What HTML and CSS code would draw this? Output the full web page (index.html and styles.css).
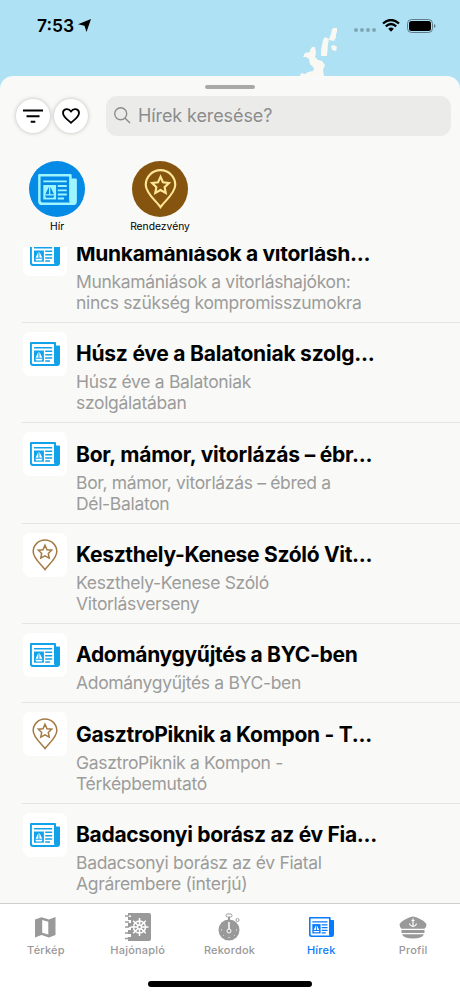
FILE: index.html
```html
<!DOCTYPE html>
<html lang="hu">
<head>
    <meta charset="UTF-8">
    <meta name="viewport" content="width=device-width, initial-scale=1.0">
    <title>Hírek</title>
    <link rel="stylesheet" href="styles.css">
</head>
<body>
    <!-- shared icons -->
    <svg class="sprite" width="0" height="0">
        <symbol id="news" viewBox="0 0 30 24">
            <path d="M26 3.500H29Q30 3.500 30 4.500V21Q30 24 27 24H3Q0 24 0 21V1Q0 0 1 0H25Q26 0 26 1Z" fill="currentColor"/>
            <path class="paper" d="M1.900 1.900H24V20Q24 21.500 24.600 22.100H3.500Q1.900 22.100 1.900 20.500Z"/>
            <path d="M4 5.700H22.200M15.200 9.300H22.200M15.200 12.700H22.200M15.200 15.900H22.200M15.200 19H20" fill="none" stroke="currentColor" stroke-width="1.500"/>
            <path d="M4 8.500H13.900V19.700H4Z" fill="currentColor"/>
            <path class="paper" d="M8.400 9.800V15.700H5.600ZM9.400 9.800L12.300 15.700H9.400ZM5.200 16.700H12.700L11.700 18.400H6.200Z"/>
        </symbol>
        <symbol id="pin" viewBox="0 0 26 32">
            <path d="M13 30.500C10 26 1.200 19.500 1.200 12.700A11.800 11.800 0 0 1 24.800 12.700C24.800 19.500 16 26 13 30.500Z"/>
            <path d="M13 6.200L15 10.700L19.700 11.200L16.300 14.500L17.200 19.100L13 16.800L8.800 19.100L9.700 14.500L6.300 11.200L11 10.700Z"/>
        </symbol>
    </svg>

    <div class="screen">
        <header class="map">
            <svg class="island" width="40" height="48" viewBox="0 0 40 48">
                <path d="M32 1L34 0H37V4L36 6V9L34 13L29 12L30 8L31 6ZM23 12L25 9L29 11L28 16L27 28H21V22L22 17ZM31 18L34 17L37 19L36 23L32 22ZM10 22L12 19H15L16 25L15 29L18 32L22 33L25 37L23 42L24 48H0L1 45L5 46L8 44L13 43L14 40L10 36L9 31L6 29H3L5 25L10 24Z"/>
            </svg>
            <div class="status">
                <span class="time">7:53</span>
                <svg class="arrow" width="13" height="13" viewBox="0 0 13 13"><path d="M13 0L8.500 13L6.500 6.800L0 5.200Z"/></svg>
                <div class="dots"><i></i><i></i><i></i><i></i></div>
                <svg width="18" height="13" viewBox="0 0 18 13">
                    <path d="M1 4.500Q9-2.500 17 4.500M3.800 7.300Q9 2.800 14.200 7.300" fill="none" stroke="#000" stroke-width="2.300"/>
                    <path d="M6.200 9.700Q9 7.500 11.800 9.700L9 12.700Z"/>
                </svg>
                <svg class="battery" width="29" height="14" viewBox="0 0 29 14">
                    <rect x="0.500" y="0.500" width="25" height="13" rx="4" fill="none" stroke="#5f7d88"/>
                    <rect x="2" y="2" width="22" height="10" rx="2.500"/>
                    <path d="M27 5Q28.500 5.500 28.500 7T27 9Z" fill="#5f7d88"/>
                </svg>
            </div>
        </header>

        <main class="sheet">
            <div class="handle"></div>
            <div class="tools">
                <button type="button" class="round">
                    <svg width="20" height="14" viewBox="0 0 20 14"><path d="M0 1.500H20M3.500 7.200H16.500M7.700 12.800H12.300" fill="none" stroke="#000" stroke-width="2"/></svg>
                </button>
                <button type="button" class="round">
                    <svg width="18" height="16" viewBox="0 0 18 16"><path d="M9 14.800C7 12.800 1 9.200 1 5C1 0.200 7 0 9 3.600C11 0 17 0.200 17 5C17 9.200 11 12.800 9 14.800Z" fill="none" stroke="#000" stroke-width="1.800" stroke-linejoin="round"/></svg>
                </button>
                <div class="search">
                    <svg width="17" height="17" viewBox="0 0 17 17"><path d="M11.200 11.200L16 16M12.700 6.700A6 6 0 1 1 0.700 6.700A6 6 0 0 1 12.700 6.700Z" fill="none" stroke="#8c8c8c" stroke-width="1.400"/></svg>
                    <span>Hírek keresése?</span>
                </div>
            </div>
            <div class="categories">
                <div class="category">
                    <div class="bubble blue"><svg width="39" height="31"><use href="#news"/></svg></div>
                    <span>Hír</span>
                </div>
                <div class="category">
                    <div class="bubble brown"><svg width="33" height="40"><use href="#pin"/></svg></div>
                    <span>Rendezvény</span>
                </div>
            </div>

            <div class="list">
                <article class="item first">
                    <div class="thumb"><svg width="30" height="24"><use href="#news"/></svg></div>
                    <div class="text">
                        <h2>Munkamániások a vitorlásh...</h2>
                        <p>Munkamániások a vitorláshajókon:<br>nincs szükség kompromisszumokra</p>
                    </div>
                </article>
                <article class="item">
                    <div class="thumb"><svg width="30" height="24"><use href="#news"/></svg></div>
                    <div class="text">
                        <h2 class="loose">Húsz éve a Balatoniak szolg...</h2>
                        <p>Húsz éve a Balatoniak<br>szolgálatában</p>
                    </div>
                </article>
                <article class="item">
                    <div class="thumb"><svg width="30" height="24"><use href="#news"/></svg></div>
                    <div class="text">
                        <h2 class="loose">Bor, mámor, vitorlázás – ébr...</h2>
                        <p>Bor, mámor, vitorlázás – ébred a<br>Dél-Balaton</p>
                    </div>
                </article>
                <article class="item">
                    <div class="thumb event"><svg width="26" height="32"><use href="#pin"/></svg></div>
                    <div class="text">
                        <h2>Keszthely-Kenese Szóló Vit...</h2>
                        <p>Keszthely-Kenese Szóló<br>Vitorlásverseny</p>
                    </div>
                </article>
                <article class="item">
                    <div class="thumb"><svg width="30" height="24"><use href="#news"/></svg></div>
                    <div class="text">
                        <h2>Adománygyűjtés a BYC-ben</h2>
                        <p>Adománygyűjtés a BYC-ben</p>
                    </div>
                </article>
                <article class="item">
                    <div class="thumb event"><svg width="26" height="32"><use href="#pin"/></svg></div>
                    <div class="text">
                        <h2>GasztroPiknik a Kompon - T...</h2>
                        <p>GasztroPiknik a Kompon -<br>Térképbemutató</p>
                    </div>
                </article>
                <article class="item">
                    <div class="thumb"><svg width="30" height="24"><use href="#news"/></svg></div>
                    <div class="text">
                        <h2>Badacsonyi borász az év Fia...</h2>
                        <p>Badacsonyi borász az év Fiatal<br>Agrárembere (interjú)</p>
                    </div>
                </article>
            </div>
        </main>

        <nav class="tabs">
            <div class="tab">
                <div class="icon"><svg width="21" height="21" viewBox="0 0 21 21"><path d="M0 2.500L6.500 0.200L14 2.500L20.500 0V18L14 20.500L6.500 18L0 20.500Z"/><path d="M7.200 3L13.300 4.700V17.500L7.200 15.700Z" fill="#fff"/></svg></div>
                <span>Térkép</span>
            </div>
            <div class="tab">
                <div class="icon"><svg width="28" height="28" viewBox="0 0 28 28">
                    <path d="M4 0H25Q27 0 27 2V26Q27 28 25 28H4V24H7V21H4V17H7V14H4V10H7V7H4V4H7V2.500H4Z"/>
                    <path d="M1 3H5M1 9H5M1 14H5M1 20H5M1 25.500H5" stroke="#999" stroke-width="1.500"/>
                    <g fill="none" stroke="#fff" stroke-width="1.500"><circle cx="15.500" cy="14" r="6"/><circle cx="15.500" cy="14" r="2"/><path d="M15.500 5V12M15.500 16V23M6.500 14H13.500M17.500 14H24.500M9.200 7.700L14 12.500M17 15.500L21.800 20.300M21.800 7.700L17 12.500M14 15.500L9.200 20.300"/></g>
                </svg></div>
                <span>Hajónapló</span>
            </div>
            <div class="tab">
                <div class="icon"><svg width="22" height="28" viewBox="0 0 22 28">
                    <circle cx="11" cy="17" r="10.500"/>
                    <rect x="8" y="1" width="6" height="3" rx="1.500" fill="none" stroke="#999"/>
                    <path d="M11 4V7" stroke="#999" stroke-width="2"/>
                    <circle cx="19.500" cy="7" r="1.500" fill="none" stroke="#999"/>
                    <g fill="none" stroke="#fff"><circle cx="11" cy="18" r="2"/><path d="M11 9V16" stroke-width="1.500"/><path d="M3 17H4M18 17H19M11 24V25M5.500 22.500L6 22M16 22L16.500 22.500"/></g>
                </svg></div>
                <span>Rekordok</span>
            </div>
            <div class="tab active">
                <div class="icon"><svg width="25" height="20"><use href="#news"/></svg></div>
                <span>Hírek</span>
            </div>
            <div class="tab">
                <div class="icon"><svg width="28" height="23" viewBox="0 0 28 23">
                    <path d="M0.500 8Q3 4.500 7 3Q11 0.500 14 0.500Q17 0.500 21 3Q25 4.500 27.500 8Q27.500 11 25.500 12.700H2.500Q0.500 11 0.500 8ZM2.500 14H25.500V17H2.500ZM3 18.200H25Q23 22.500 14 22.500Q5 22.500 3 18.200Z"/>
                    <path d="M14 2.500V10M12.500 4.500H15.500M10.500 7.500Q11 10 14 10.500Q17 10 17.500 7.500" fill="none" stroke="#fff" stroke-width="1.200"/>
                </svg></div>
                <span>Profil</span>
            </div>
        </nav>
        <div class="home"></div>
    </div>
</body>
</html>
```
FILE: styles.css
```css
* {
    box-sizing: border-box;
}
body {
    margin: 0;
    font-family: Inter, sans-serif;
    background-color: #aee1f4;
    color: #000;
}
svg {
    display: block;
    flex-shrink: 0;
}
.sprite {
    position: absolute;
}
.paper {
    fill: var(--paper, #fff);
}
.screen {
    width: 460px;
    height: 996px;
    display: flex;
    flex-direction: column;
    background-color: #fff;
    overflow: hidden;
}

/* map strip and status bar */
.map {
    position: relative;
    height: 96px;
    flex-shrink: 0;
    background-color: #aee1f4;
}
.island {
    position: absolute;
    left: 300px;
    top: 28px;
    fill: #f9f8f3;
}
.status {
    display: flex;
    align-items: center;
    height: 51px;
    padding: 0 24px 0 37px;
}
.time {
    font-size: 17.500px;
    font-weight: 600;
    line-height: 20px;
    width: 41px;
}
.dots {
    display: flex;
    gap: 2px;
    margin: 9px 6px 0 auto;
}
.dots i {
    width: 4px;
    height: 4px;
    border-radius: 50%;
    background-color: #7fa6b5;
}
.battery {
    margin-left: 7px;
}

/* bottom sheet */
.sheet {
    position: relative;
    display: flex;
    flex-direction: column;
    height: 827px;
    margin-top: -20px;
    border-radius: 13px 13px 0 0;
    background-color: #f9f9f7;
}
.handle {
    width: 50px;
    height: 4px;
    margin: 9px auto 0;
    border-radius: 2px;
    background-color: #a9a9a7;
}
.tools {
    display: flex;
    align-items: center;
    height: 40px;
    margin-top: 7px;
    padding: 0 9px 0 16px;
}
.round {
    display: flex;
    align-items: center;
    justify-content: center;
    width: 34px;
    height: 34px;
    margin-right: 4px;
    padding: 0;
    border: none;
    border-radius: 50%;
    background-color: #fff;
    box-shadow: 0 0 4px rgba(0, 0, 0, 0.25);
}
.search {
    display: flex;
    align-items: center;
    flex: 1;
    height: 40px;
    margin-left: 14px;
    padding: 0 0 1px 8px;
    gap: 7px;
    border-radius: 11px;
    background-color: #ebebea;
    color: #8c8c8c;
    font-size: 18px;
    letter-spacing: -0.1px;
}
.categories {
    display: flex;
    height: 111px;
    padding: 25px 0 0 5.500px;
}
.category {
    display: flex;
    flex-direction: column;
    align-items: center;
    width: 103px;
    font-size: 10.300px;
    line-height: 14px;
}
.bubble {
    display: flex;
    align-items: center;
    justify-content: center;
    width: 56px;
    height: 56px;
    margin-bottom: 2px;
    border-radius: 50%;
}
.blue {
    --paper: #058ae5;
    background-color: #058ae5;
    color: #9ef5ff;
}
.brown {
    background-color: #855510;
    fill: none;
    stroke: #ffe794;
    stroke-width: 1.700;
}

/* news list */
.list {
    flex: 1;
    min-height: 0;
    overflow: hidden;
}
.item {
    display: flex;
    margin-left: 22px;
    padding: 9px 0 8px 1px;
    border-bottom: 1px solid #e4e4e2;
}
.first {
    margin-top: -24.500px;
}
.thumb {
    display: flex;
    align-items: center;
    justify-content: center;
    width: 44px;
    height: 44px;
    flex-shrink: 0;
    border-radius: 7px;
    background-color: #fff;
    color: #12a2ea;
}
.event {
    fill: none;
    stroke: #a37a42;
    stroke-width: 1.500;
}
.text {
    padding: 8.300px 0 0.700px 9px;
}
h2 {
    margin: 0;
    font-size: 21px;
    font-weight: 700;
    line-height: 27px;
    letter-spacing: -0.3px;
    white-space: nowrap;
}
.loose {
    letter-spacing: -0.220px;
}
p {
    margin: 4px 0 0;
    font-size: 17.500px;
    line-height: 21.200px;
    letter-spacing: -0.320px;
    color: #9c9c9b;
    white-space: nowrap;
}

/* tab bar */
.tabs {
    display: flex;
    height: 77px;
    flex-shrink: 0;
    border-top: 1px solid #cfcfcf;
    background-color: #fff;
}
.tab {
    display: flex;
    flex-direction: column;
    align-items: center;
    width: 91.800px;
    font-size: 11px;
    font-weight: 500;
    line-height: 14px;
    letter-spacing: 0.2px;
    color: #999;
    fill: #999;
}
.icon {
    display: flex;
    align-items: center;
    height: 46px;
    margin-bottom: -7px;
}
.active {
    color: #087aff;
}
.home {
    width: 164px;
    height: 6px;
    margin: 1px auto 0;
    border-radius: 3px;
    background-color: #000;
    flex-shrink: 0;
}
```
